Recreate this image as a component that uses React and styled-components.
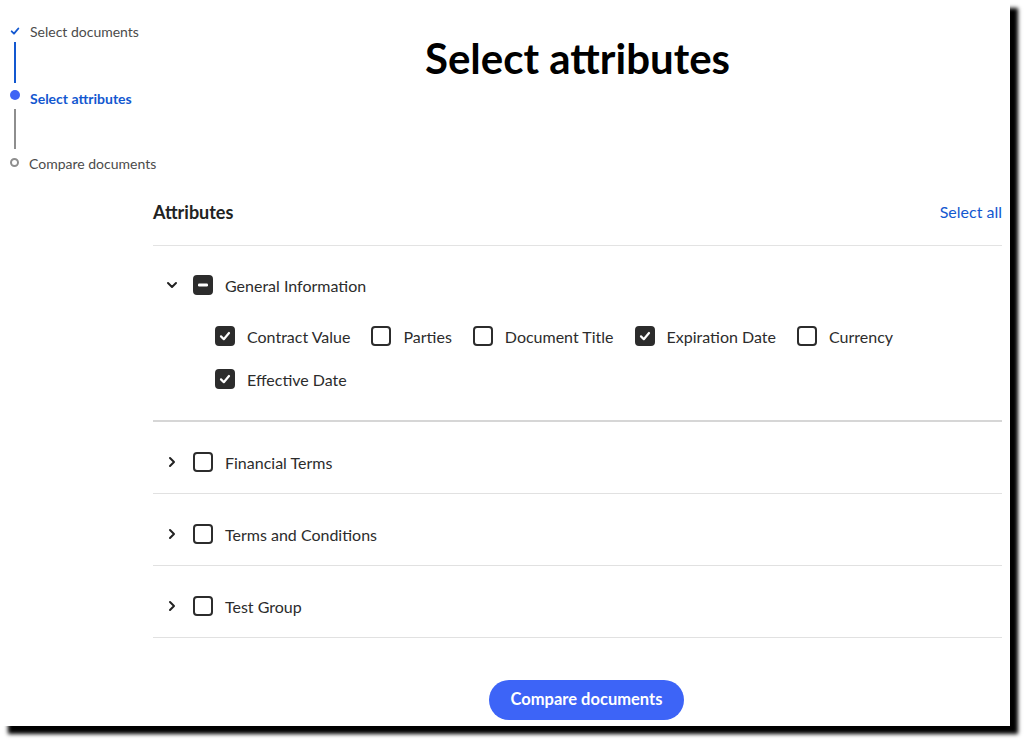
import styled, { createGlobalStyle } from "styled-components";
import { useState } from "react";

const GlobalStyle = createGlobalStyle`
  html, body {
    margin: 0;
    padding: 0;
    background: #ffffff;
  }
  body {
    font-family: Lato, "Open Sans", "Liberation Sans", sans-serif;
    color: #2c2c2c;
  }
`;

const Page = styled.div`
  width: 1025px;
  height: 740px;
  overflow: hidden;
  background: #ffffff;
`;

const Frame = styled.div`
  width: 1010px;
  height: 726px;
  background: #ffffff;
  box-shadow: 8px 8px 4px #000000;
  display: flex;
  overflow: hidden;
`;

const Stepper = styled.nav`
  width: 143px;
  flex-shrink: 0;
  padding: 21px 0 0 10px;
  display: flex;
  flex-direction: column;
`;

const Step = styled.div`
  display: flex;
  align-items: center;
  height: 20px;
  margin-top: ${(p) => p.$offset || 0}px;
  white-space: nowrap;
`;

const StepMark = styled.span`
  width: 10px;
  display: flex;
  justify-content: center;
  align-self: ${(p) => (p.$raise ? "flex-start" : "center")};
  margin-top: ${(p) => (p.$raise ? "2px" : "0")};
`;

const StepLabel = styled.span`
  margin-left: 10px;
  font-size: 14px;
  font-weight: ${(p) => (p.$active ? 700 : 400)};
  color: ${(p) => (p.$active ? "#1358d0" : "#4b4b4b")};
`;

const Connector = styled.div`
  width: 2px;
  height: ${(p) => p.$height}px;
  margin: 1px 0 0 4px;
  background: ${(p) => (p.$done ? "#1358d0" : "#8e8e8e")};
`;

const Dot = styled.span`
  width: 10px;
  height: 10px;
  border-radius: 50%;
  background: #3e63f5;
`;

const Ring = styled.span`
  width: 9px;
  height: 9px;
  box-sizing: border-box;
  border-radius: 50%;
  border: 2px solid #8e8e8e;
  margin-top: -2px;
`;

const Main = styled.main`
  flex: 1;
  margin-right: 8px;
  display: flex;
  flex-direction: column;
`;

const Title = styled.h1`
  margin: 34px 0 0;
  line-height: 48px;
  text-align: center;
  font-size: 42px;
  font-weight: 700;
  color: #000000;
`;

const Header = styled.div`
  margin-top: 108px;
  height: 44px;
  padding-bottom: 11px;
  border-bottom: 1px solid #e3e3e3;
  display: flex;
  align-items: center;
  justify-content: space-between;
`;

const HeaderTitle = styled.h2`
  margin: 0;
  font-size: 18px;
  font-weight: 700;
  color: #222222;
`;

const LinkButton = styled.button`
  border: none;
  background: none;
  padding: 0 0 2px;
  font-family: inherit;
  font-size: 16px;
  color: #1358d0;
  cursor: pointer;
`;

const Group = styled.section`
  padding: ${(p) => (p.$open ? "19px 0 29px" : "20px 0 11px")};
  border-bottom: ${(p) => (p.$open ? "2px solid #d6d6d6" : "1px solid #e1e1e1")};
`;

const GroupRow = styled.div`
  height: 40px;
  padding-left: 10px;
  display: flex;
  align-items: center;
`;

const Chevron = styled.button`
  width: 18px;
  height: 18px;
  padding: 0;
  border: none;
  background: none;
  display: flex;
  align-items: center;
  justify-content: center;
  margin-right: 12px;
  cursor: pointer;
`;

const Box = styled.span`
  width: 20px;
  height: 20px;
  box-sizing: border-box;
  border-radius: 4px;
  border: 2px solid #2c2c2c;
  background: ${(p) => (p.$filled ? "#2c2c2c" : "#ffffff")};
  display: flex;
  align-items: center;
  justify-content: center;
  flex-shrink: 0;
`;

const Check = styled.label`
  display: flex;
  align-items: center;
  gap: 12px;
  height: 24px;
  font-size: 16px;
  color: #2c2c2c;
  cursor: pointer;
  white-space: nowrap;
`;

const Children = styled.div`
  display: flex;
  flex-wrap: wrap;
  column-gap: 21px;
  row-gap: 19px;
  margin-top: 19px;
  padding: 0 60px 0 62px;
`;

const Footer = styled.div`
  display: flex;
  justify-content: center;
  margin-top: 42px;
  padding-left: 18px;
`;

const PrimaryButton = styled.button`
  height: 40px;
  padding: 0 22px 3px;
  border: none;
  border-radius: 20px;
  background: #3d64f7;
  color: #ffffff;
  font-family: inherit;
  font-size: 16.5px;
  font-weight: 700;
  cursor: pointer;
`;

const CheckIcon = ({ color = "#ffffff", size = 12 }) => (
  <svg width={size} height={size} viewBox="0 0 12 12">
    <path d="M2 6.4 L4.8 9.2 L10 3" fill="none" stroke={color} strokeWidth="2.2" strokeLinecap="round" strokeLinejoin="round" />
  </svg>
);

const ChevronIcon = ({ open }) => (
  <svg width="12" height="12" viewBox="0 0 12 12">
    <path
      d={open ? "M2 4 L6 8 L10 4" : "M4 2 L8 6 L4 10"}
      fill="none"
      stroke="#222"
      strokeWidth="2"
      strokeLinecap="round"
      strokeLinejoin="round"
    />
  </svg>
);

const Checkbox = ({ state, label }) => (
  <Check>
    <Box $filled={state !== "off"}>
      {state === "on" && <CheckIcon />}
      {state === "mixed" && (
        <svg width="10" height="4" viewBox="0 0 10 4">
          <rect x="0" y="0.5" width="10" height="3" rx="1.2" fill="#fff" />
        </svg>
      )}
    </Box>
    {label}
  </Check>
);

const general = [
  { name: "Contract Value", on: true },
  { name: "Parties", on: false },
  { name: "Document Title", on: false },
  { name: "Expiration Date", on: true },
  { name: "Currency", on: false },
  { name: "Effective Date", on: true },
];

const groups = ["Financial Terms", "Terms and Conditions", "Test Group"];

const App = () => {
  const [open] = useState(true);

  return (
    <Page>
      <GlobalStyle />
      <Frame>
        <Stepper>
          <Step>
            <StepMark>
              <CheckIcon color="#1358d0" size={10} />
            </StepMark>
            <StepLabel>Select documents</StepLabel>
          </Step>
          <Connector $done $height={41} />
          <Step $offset={5}>
            <StepMark $raise>
              <Dot />
            </StepMark>
            <StepLabel $active>Select attributes</StepLabel>
          </Step>
          <Connector $height={40} />
          <Step $offset={4}>
            <StepMark>
              <Ring />
            </StepMark>
            <StepLabel>Compare documents</StepLabel>
          </Step>
        </Stepper>

        <Main>
          <Title>Select attributes</Title>

          <Header>
            <HeaderTitle>Attributes</HeaderTitle>
            <LinkButton>Select all</LinkButton>
          </Header>

          <Group $open={open}>
            <GroupRow>
              <Chevron>
                <ChevronIcon open />
              </Chevron>
              <Checkbox state="mixed" label="General Information" />
            </GroupRow>
            <Children>
              {general.map((item) => (
                <Checkbox key={item.name} state={item.on ? "on" : "off"} label={item.name} />
              ))}
            </Children>
          </Group>

          {groups.map((g) => (
            <Group key={g}>
              <GroupRow>
                <Chevron>
                  <ChevronIcon />
                </Chevron>
                <Checkbox state="off" label={g} />
              </GroupRow>
            </Group>
          ))}

          <Footer>
            <PrimaryButton>Compare documents</PrimaryButton>
          </Footer>
        </Main>
      </Frame>
    </Page>
  );
};

export default App;
